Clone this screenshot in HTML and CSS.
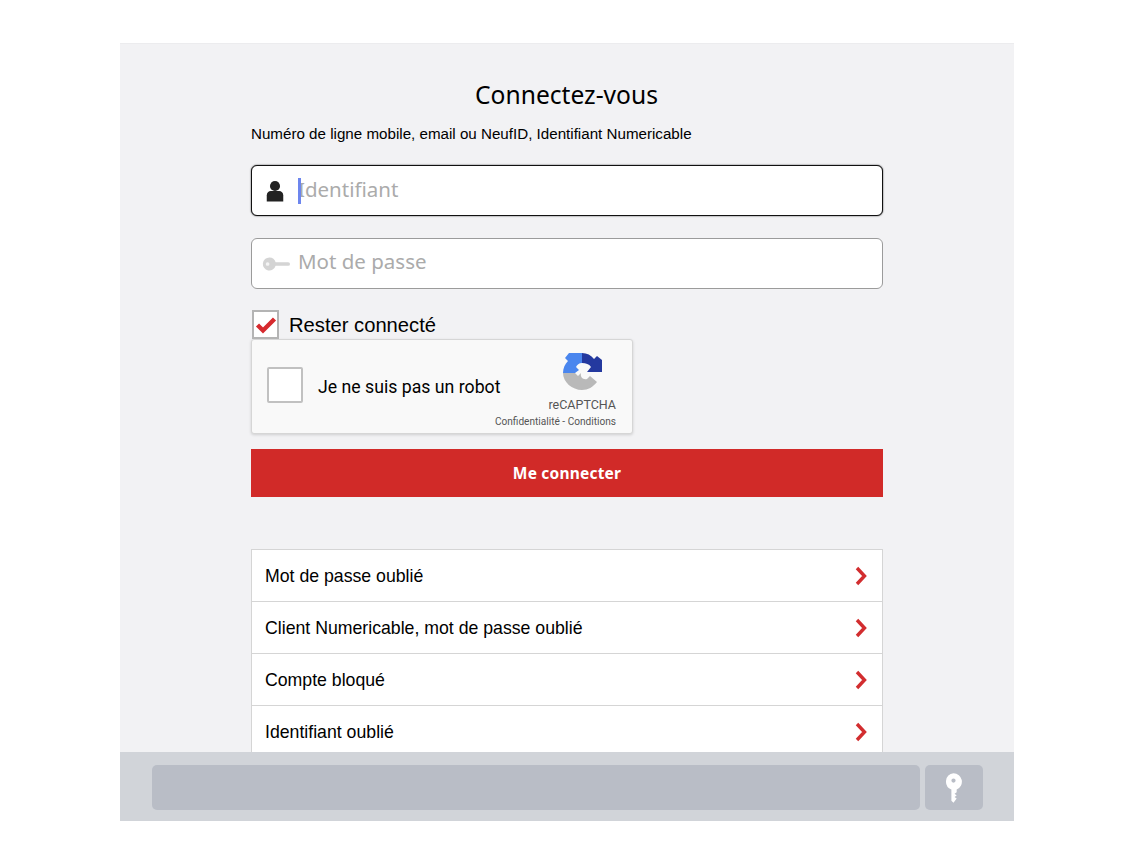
FILE: index.html
```html
<!DOCTYPE html>
<html lang="fr">
<head>
<meta charset="utf-8">
<title>Connectez-vous</title>
<link rel="stylesheet" href="styles.css">
</head>
<body>
<div class="panel">
  <main class="main">
    <div class="column">
      <h1 class="title">Connectez-vous</h1>
      <p class="hint">Numéro de ligne mobile, email ou NeufID, Identifiant Numericable</p>
      <div class="field field-focus">
        <svg class="field-icon" width="24" height="24" viewBox="0 0 24 24"><circle cx="12" cy="6.500" r="5.500" fill="#222"/><path d="M3 23.500v-7c0-2.500 2-4.500 4.500-4.500h9c2.500 0 4.500 2 4.500 4.500v7z" fill="#222"/></svg>
        <span class="caret"></span>
        <span class="placeholder">Identifiant</span>
      </div>
      <div class="field field-password">
        <svg class="field-icon field-icon-key" width="30" height="16" viewBox="0 0 30 16"><path d="M8 1a7 7 0 0 1 6.600 5H28a1.800 1.800 0 0 1 0 4H14.600A7 7 0 1 1 8 1z" fill="#d4d4d4"/><circle cx="6" cy="8" r="2" fill="#f4f4f4"/></svg>
        <span class="placeholder">Mot de passe</span>
      </div>
      <label class="remember">
        <span class="checkbox">
          <svg width="22" height="18" viewBox="0 0 22 18"><path d="M2.500 9l5.500 5.500L19.500 3" fill="none" stroke="#d62a2e" stroke-width="4.400"/></svg>
        </span>
        <span>Rester connecté</span>
      </label>
      <div class="captcha">
        <span class="captcha-box"></span>
        <span class="captcha-label">Je ne suis pas un robot</span>
        <div class="captcha-brand">
          <svg class="captcha-logo" width="40" height="40" viewBox="0 0 40 40">
            <path d="M1 21C1 16 3 12 6 9L3 6 7 1H20V11C17 11 15 13 14 15L17 18 13 21z" fill="#4a86ee"/>
            <path d="M20 1C25 1 29 3 32 7L35 4 40 8V20H25L29 15C27 12 24 11 20 11z" fill="#24399f"/>
            <path d="M1 21H13L16 24 19 21C18 25 21 28 25 27L28 24 35 30C31 35 26 38 20 38 10 38 1 30 1 21z" fill="#b9b9b9"/>
          </svg>
          <span class="captcha-name">reCAPTCHA</span>
          <span class="captcha-links">Confidentialité - Conditions</span>
        </div>
      </div>
      <button class="submit" type="button">Me connecter</button>
      <ul class="links">
        <li class="link"><span>Mot de passe oublié</span><svg class="chevron" width="12" height="20" viewBox="0 0 12 20"><path d="M2 2l7.500 8L2 18" fill="none" stroke="#d22d2f" stroke-width="3.400"/></svg></li>
        <li class="link"><span>Client Numericable, mot de passe oublié</span><svg class="chevron" width="12" height="20" viewBox="0 0 12 20"><path d="M2 2l7.500 8L2 18" fill="none" stroke="#d22d2f" stroke-width="3.400"/></svg></li>
        <li class="link"><span>Compte bloqué</span><svg class="chevron" width="12" height="20" viewBox="0 0 12 20"><path d="M2 2l7.500 8L2 18" fill="none" stroke="#d22d2f" stroke-width="3.400"/></svg></li>
        <li class="link"><span>Identifiant oublié</span><svg class="chevron" width="12" height="20" viewBox="0 0 12 20"><path d="M2 2l7.500 8L2 18" fill="none" stroke="#d22d2f" stroke-width="3.400"/></svg></li>
      </ul>
    </div>
  </main>
  <footer class="footer">
    <div class="footer-field"></div>
    <div class="footer-key">
      <svg class="footer-key-icon" width="19" height="32" viewBox="0 0 18 30"><path fill-rule="evenodd" d="M9 1a8 8 0 0 1 3 15.400V19l-2 1.500 2 1.500-2 1.500 2 1.500-3 4-2-2V16.400A8 8 0 0 1 9 1zm0 5a2 2 0 1 0 0 4 2 2 0 0 0 0-4z" fill="#fff"/></svg>
    </div>
  </footer>
</div>
</body>
</html>
```
FILE: styles.css
```css
* { box-sizing: border-box; }
html, body { margin: 0; padding: 0; background: #fff; }
body { padding-top: 43px; font-family: "Liberation Sans", Arial, sans-serif; color: #000; }
.panel {
  width: 894px;
  height: 778px;
  margin-left: 120px;
  background: #f2f2f4;
  border-top: 1px solid #ececee;
  display: flex;
  flex-direction: column;
  overflow: hidden;
}
.main { flex: 1; min-height: 0; overflow: hidden; padding-left: 131px; }
.column { width: 632px; padding-top: 36px; }
.title {
  margin: 0;
  padding-right: 1px;
  font-family: "Noto Sans", sans-serif;
  font-weight: 400;
  font-size: 24.600px;
  line-height: 30px;
  text-align: center;
}
.hint { margin: 14px 0 0; font-size: 15.170px; line-height: 20px; white-space: nowrap; }
.field {
  height: 51px;
  margin-top: 22px;
  display: flex;
  align-items: center;
  background: #fff;
  border: 1px solid #9b9b9b;
  border-radius: 6px;
  padding-left: 11px;
}
.field-focus { margin-top: 21px; border: 1px solid #111; box-shadow: 0 0 1.500px #111; padding-left: 12px; }
.field-icon { flex: none; margin-right: 11px; width: 24px; height: 24px; }
.field-focus .field-icon { width: 22px; height: 24px; margin-right: 12px; }
.field-icon-key { width: 28px; height: 16px; margin-left: -1px; margin-right: 8px; }
.caret { width: 3px; height: 26px; margin-right: -3px; background: #6d86ee; position: relative; z-index: 1; }
.placeholder { font-family: "Noto Sans", sans-serif; font-size: 20.500px; color: #ababab; position: relative; top: -2px; }
.field-password .placeholder { top: -3px; }
.remember { display: flex; align-items: center; height: 29px; margin: 21px 0 0 1px; font-size: 20.200px; }
.checkbox {
  width: 27px;
  height: 29px;
  margin-right: 10px;
  background: #fff;
  border: 2px solid #b4b4b4;
  display: flex;
  align-items: center;
  justify-content: center;
}
.remember span:last-child { position: relative; top: 1px; }
.captcha {
  width: 382px;
  height: 95px;
  display: flex;
  align-items: center;
  padding-left: 15px;
  background: #f9f9f9;
  border: 1px solid #d6d6d6;
  border-radius: 3px;
  box-shadow: 0 1px 3px rgba(0,0,0,.15);
  font-family: Roboto, sans-serif;
}
.captcha-box { flex: none; width: 36px; height: 36px; background: #fff; border: 2px solid #c1c1c1; border-radius: 2px; margin-top: -3px; }
.captcha-label { flex: 1; min-width: 0; margin-left: 15px; font-size: 17.700px; white-space: nowrap; }
.captcha-brand { flex: none; display: flex; flex-direction: column; align-items: flex-end; align-self: flex-start; padding: 12px 16px 0 0; color: #555; white-space: nowrap; }
.captcha-logo { margin-right: 14px; }
.captcha-name { font-size: 12.500px; line-height: 15px; margin-top: 5px; }
.captcha-links { font-size: 10.100px; line-height: 13px; margin-top: 3px; }
.submit {
  display: block;
  width: 100%;
  height: 48px;
  margin-top: 15px;
  background: #d12a28;
  border: 0;
  color: #fff;
  font-family: "Noto Sans", sans-serif;
  font-weight: 700;
  font-size: 15.500px;
  letter-spacing: .2px;
}
.links { list-style: none; margin: 52px 0 0; padding: 0; }
.link {
  height: 52px;
  display: flex;
  align-items: center;
  justify-content: space-between;
  padding: 0 15px 0 13px;
  background: #fff;
  border: 1px solid #d5d5d5;
  border-bottom: 0;
  font-size: 17.700px;
}
.link span { padding-top: 2px; }
.footer {
  flex: none;
  height: 69px;
  display: flex;
  gap: 5px;
  padding: 13px 31px 11px 32px;
  background: #d1d4d9;
}
.footer-field { flex: 1; background: #b9bdc6; border-radius: 5px; }
.footer-key { width: 58px; background: #b9bdc6; border-radius: 5px; display: flex; align-items: center; justify-content: center; }
.footer-key-icon { margin-right: 2px; }
```
